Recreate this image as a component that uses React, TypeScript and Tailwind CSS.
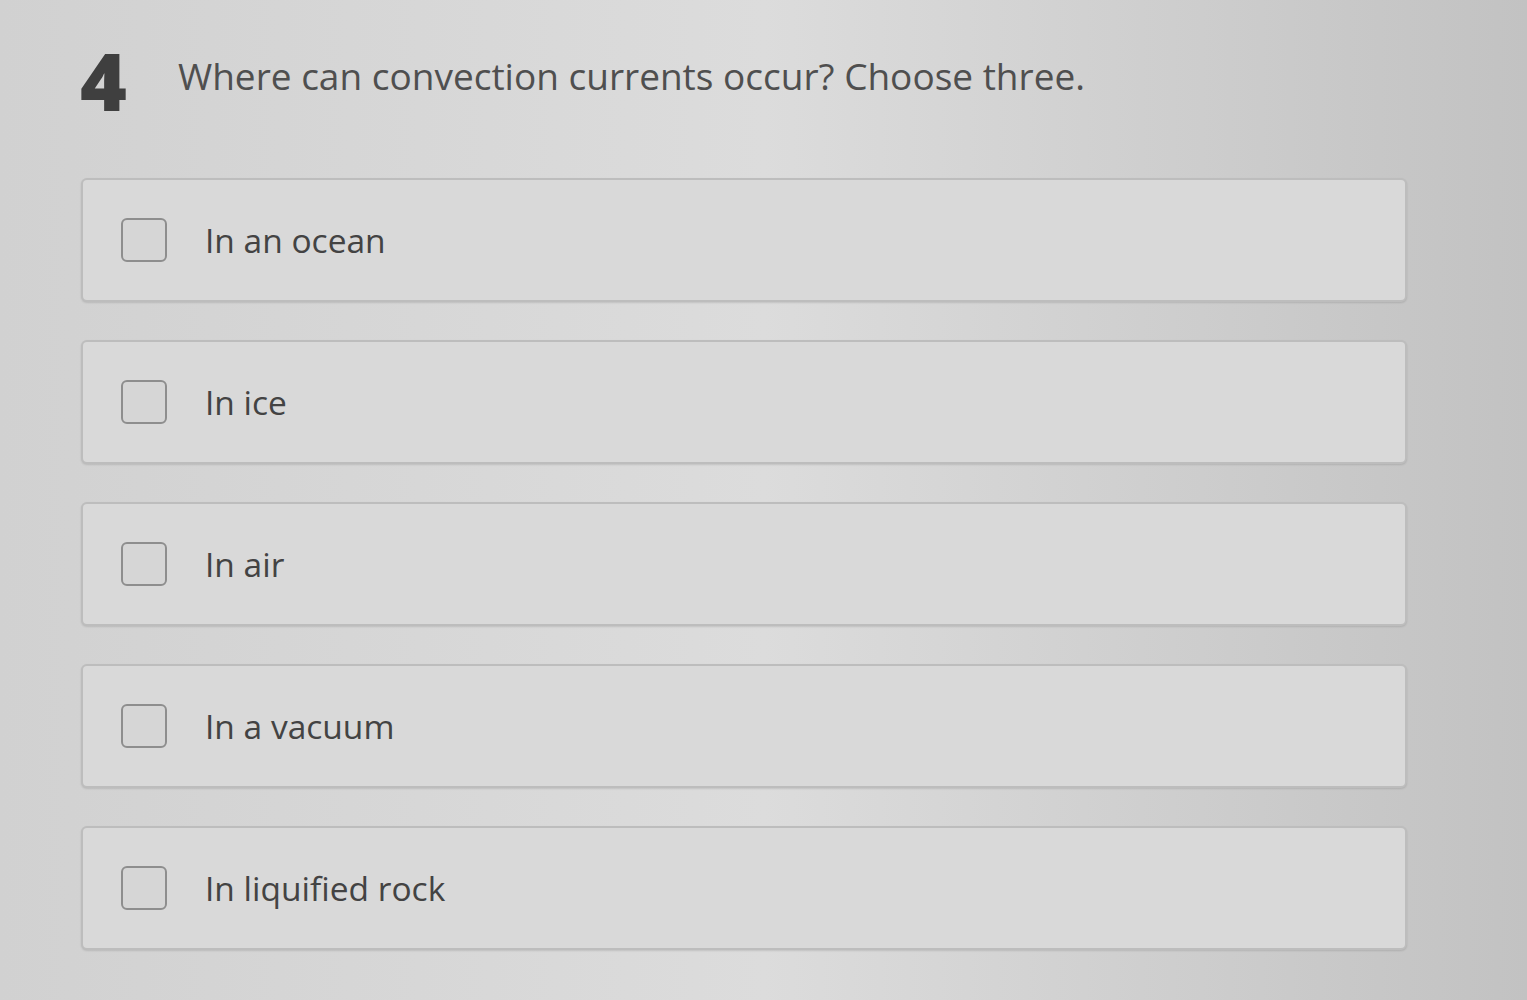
import React from 'react'

const options = ['In an ocean', 'In ice', 'In air', 'In a vacuum', 'In liquified rock']

const Option = ({ label }: { label: string }) => {
    return (
        <label className="flex h-[124px] items-center rounded-[6px] border-2 border-[#bdbdbd] bg-[#d9d9d9] pl-[38px] shadow-[0_1px_2px_rgba(0,0,0,0.12)]">
            <span className="h-[44px] w-[46px] shrink-0 rounded-[6px] border-2 border-[#8e8e8e] bg-[#d6d6d6]" />
            <span className="ml-[38px] text-[33.5px] text-[#434343]">{label}</span>
        </label>
    )
}

const App = () => {
    return (
        <div
            className="h-[1000px] w-full overflow-hidden bg-linear-to-r from-[#d1d1d1] via-[#dcdcdc] to-[#c2c2c2] pt-[40px]"
            style={{ fontFamily: '"Open Sans", "Noto Sans", sans-serif' }}
        >
            <div className="flex items-start pl-[80px]">
                <span className="w-[98px] text-[80px] font-extrabold leading-[80px] text-[#3f3f3f]">4</span>
                <h1 className="pt-[8px] text-[37px] leading-[56px] text-[#4f4f4f]">
                    Where can convection currents occur? Choose three.
                </h1>
            </div>
            <div className="ml-[81px] mt-[58px] flex w-[1326px] flex-col gap-[38px]">
                {options.map((o) => (
                    <Option key={o} label={o} />
                ))}
            </div>
        </div>
    )
}

export default App
